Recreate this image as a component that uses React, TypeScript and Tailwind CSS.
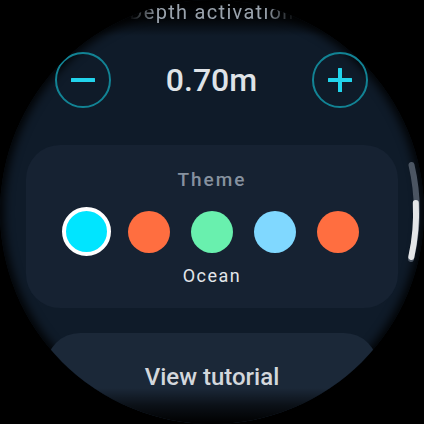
import React from "react";

const swatches = [
  { c: "bg-[#00e5ff]", selected: true },
  { c: "bg-[#ff6e40]" },
  { c: "bg-[#69f0ae]" },
  { c: "bg-[#80d8ff]" },
  { c: "bg-[#ff6e40]" },
];

export default function App() {
  return (
    <div className="w-[424px] h-[424px] bg-black overflow-hidden font-['Roboto',sans-serif]">
      <div className="relative w-[424px] h-[424px] rounded-full bg-[#0f1b29] overflow-hidden shadow-[inset_0_0_10px_4px_rgba(0,0,0,0.9)]">
        {/* top vignette */}
        <div className="absolute left-0 right-0 top-0 h-[36px] bg-gradient-to-b from-black via-black/80 to-transparent z-10" />
        {/* bottom vignette */}
        <div className="absolute left-0 right-0 bottom-0 h-[36px] bg-gradient-to-t from-black via-black/60 to-transparent z-10" />

        <div className="flex flex-col items-center">
          <div className="relative z-20 mt-[1px] h-[22px] leading-[22px] text-[20px] tracking-[1.3px] text-[#9aa3ad] [mask-image:linear-gradient(to_right,transparent_0%,black_18%,black_82%,transparent_100%)]">
            Depth activation
          </div>

          <div className="mt-[29px] w-full flex items-center justify-between pl-[55px] pr-[56px]">
            <button className="w-[56px] h-[56px] rounded-full border-2 border-[#128394] flex items-center justify-center">
              <svg width="26" height="26" viewBox="0 0 26 26">
                <rect x="1" y="11" width="24" height="4" rx="0.5" fill="#22d4ec" />
              </svg>
            </button>
            <div className="text-[32px] leading-[40px] font-medium text-[#dfe3e7]">0.70m</div>
            <button className="w-[56px] h-[56px] rounded-full border-2 border-[#128394] flex items-center justify-center">
              <svg width="26" height="26" viewBox="0 0 26 26">
                <rect x="1" y="11" width="24" height="4" rx="0.5" fill="#22d4ec" />
                <rect x="11" y="1" width="4" height="24" rx="0.5" fill="#22d4ec" />
              </svg>
            </button>
          </div>

          <div className="mt-[37px] w-[372px] h-[163px] rounded-[34px] bg-[#162232] flex flex-col items-center pt-[22px]">
            <div className="text-[19px] leading-[25px] tracking-[2px] font-medium text-[#86919f]">Theme</div>
            <div className="mt-[15px] w-full flex items-center justify-between px-[36px]">
              {swatches.map((s, i) => (
                <div key={i} className="w-[49px] h-[49px] flex items-center justify-center">
                  {s.selected ? (
                    <div className={`w-[49px] h-[49px] rounded-full ${s.c} border-[4px] border-white`} />
                  ) : (
                    <div className={`w-[42px] h-[42px] rounded-full ${s.c}`} />
                  )}
                </div>
              ))}
            </div>
            <div className="mt-[8px] text-[18px] leading-[24px] tracking-[1.5px] text-[#e3e6ea]">Ocean</div>
          </div>

          <div className="mt-[25px] w-[332px] h-[90px] rounded-[34px] bg-[#1b2838] flex justify-center pt-[29px]">
            <div className="text-[24px] leading-[30px] font-medium text-[#d3d7dc]">View tutorial</div>
          </div>
        </div>

        {/* scrollbar */}
        <svg className="absolute inset-0 z-20" width="424" height="424" viewBox="0 0 424 424">
          <path d="M411.5 165 A204 204 0 0 1 411 259" stroke="#4b5562" strokeWidth="6" fill="none" strokeLinecap="round" />
          <path d="M415.8 203 A204 204 0 0 1 411.3 257" stroke="#e4e6e8" strokeWidth="6" fill="none" strokeLinecap="round" />
        </svg>
      </div>
    </div>
  );
}
